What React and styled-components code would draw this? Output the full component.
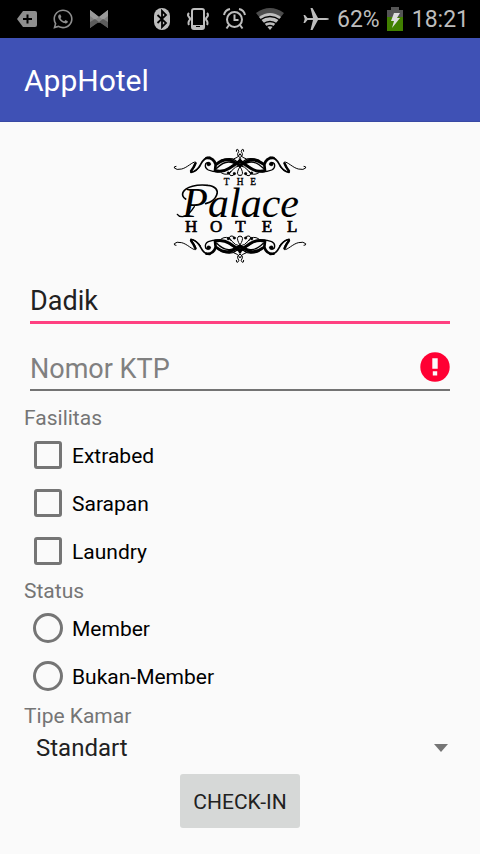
import React, { useState } from "react";
import styled, { createGlobalStyle } from "styled-components";
import { FaWhatsapp } from "react-icons/fa";

const GlobalStyle = createGlobalStyle`
  *, *::before, *::after { box-sizing: border-box; }
  body {
    margin: 0;
    background: #fafafa;
    font-family: Roboto, "Noto Sans", sans-serif;
  }
`;

const Screen = styled.div`
  min-height: 100vh;
  display: flex;
  flex-direction: column;
  background: #fafafa;
`;

const StatusBar = styled.div`
  height: 38px;
  padding: 0 11px 0 9px;
  display: flex;
  align-items: center;
  justify-content: space-between;
  background: #000;
  color: #bdbdbd;
  font-size: 23px;
  line-height: 38px;
`;

const StatusGroup = styled.div`
  display: flex;
  align-items: center;
  color: ${(p) => (p.$dim ? "#8e8e8e" : "#bdbdbd")};
`;

const StatusSlot = styled.span`
  width: 36px;
  height: 38px;
  display: flex;
  align-items: center;
  justify-content: center;
  svg { display: block; }
`;

const StatusInfo = styled.div`
  display: flex;
  align-items: center;
  margin-left: 10px;
`;

const StatusText = styled.span`
  margin-left: ${(p) => p.$gap}px;
  padding-top: 2px;
`;

const BatteryIcon = styled.svg`
  display: block;
  margin-left: 7px;
`;

const AppBar = styled.header`
  height: 84px;
  padding: 2px 24px 0;
  display: flex;
  align-items: center;
  background: #3f51b5;
  border-bottom: 1px solid #3949a3;
`;

const Title = styled.h1`
  margin: 0;
  font-size: 30px;
  line-height: 36px;
  font-weight: 400;
  color: #fff;
`;

const Form = styled.form`
  padding: 24px;
  display: flex;
  flex-direction: column;
`;

const Logo = styled.svg`
  display: block;
  align-self: center;
  margin: 2px 0 10px;
`;

const Field = styled.div`
  display: flex;
  align-items: center;
  height: ${(p) => (p.$active ? "50px" : "49px")};
  margin: 0 6px ${(p) => (p.$active ? "18px" : "11px")};
  padding-top: 2px;
  border-bottom: ${(p) => (p.$active ? "3px solid #ff4081" : "2px solid #737373")};
  svg { display: block; flex: none; }
`;

const TextInput = styled.input`
  flex: 1;
  min-width: 0;
  height: 40px;
  padding: 4px 0 0;
  border: 0;
  outline: 0;
  background: transparent;
  font-family: inherit;
  font-size: 27px;
  line-height: 36px;
  color: #212121;
  &::placeholder { color: #808080; opacity: 1; }
`;

const Group = styled.fieldset`
  margin: 0;
  padding: 0;
  border: 0;
  min-width: 0;
`;

const captionStyle = `
  display: block;
  padding: 3px 0 0;
  font-size: 21px;
  line-height: 26px;
  color: #757575;
`;
const Legend = styled.legend`${captionStyle}`;
const Caption = styled.label`${captionStyle}`;

const Option = styled.label`
  display: flex;
  align-items: center;
  height: 48px;
  font-size: 21px;
  line-height: 28px;
  color: #000;
`;

const OptionSlot = styled.span`
  width: 48px;
  display: flex;
  justify-content: center;
`;

const OptionText = styled.span`
  padding-top: 2px;
`;

const CheckBox = styled.input`
  appearance: none;
  width: 28px;
  height: 28px;
  margin: 0;
  border: 3px solid #757575;
  border-radius: 3px;
  &:checked { border-color: #ff4081; background: #ff4081; }
`;

const Radio = styled.input`
  appearance: none;
  width: 30px;
  height: 30px;
  margin: 0;
  border: 3px solid #757575;
  border-radius: 50%;
  &:checked { border-color: #ff4081; background: radial-gradient(#ff4081 50%, transparent 54%); }
`;

const SelectBox = styled.div`
  display: grid;
  align-items: center;
  height: 38px;
  svg {
    grid-area: 1 / 1;
    justify-self: end;
    pointer-events: none;
  }
`;

const Select = styled.select`
  grid-area: 1 / 1;
  appearance: none;
  width: 100%;
  height: 36px;
  padding: 0 36px 0 12px;
  border: 0;
  background: transparent;
  font-family: inherit;
  font-size: 24px;
  color: #212121;
`;

const SubmitButton = styled.button`
  align-self: center;
  min-width: 120px;
  height: 54px;
  margin-top: 7px;
  padding: 2px 12px 0;
  border: 0;
  border-radius: 3px;
  background: #d6d8d7;
  font-family: inherit;
  font-size: 21px;
  color: #212121;
`;

const TagIcon = () => (
  <svg width="20" height="18" viewBox="0 0 20 18">
    <path fill="currentColor" d="M6 1h12a2 2 0 0 1 2 2v12a2 2 0 0 1-2 2H6L0 9z" />
    <path stroke="#000" strokeWidth="2" d="M10.500 4.500v9M6 9h9" />
  </svg>
);

const BowIcon = () => (
  <svg width="18" height="18" viewBox="0 0 18 18">
    <path fill="#808080" d="M0 0l9 7 9-7v18l-9-7-9 7z" />
    <path fill="#9a9a9a" d="M0 0l13 10-4 3L0 6zM18 0L5 10l4 3 9-7z" />
    <path fill="#858585" d="M9 7l4 3-4 3-4-3z" />
    <path fill="#5c5c5c" d="M0 18v-6l5-3 4 3zM18 18v-6l-5-3-4 3z" />
  </svg>
);

const BluetoothIcon = () => (
  <svg width="16" height="24" viewBox="0 0 16 24">
    <rect x="0" y="1" width="16" height="22" rx="8" fill="currentColor" />
    <path fill="none" stroke="#000" strokeWidth="1.800" d="M3.500 8l8.500 8-4 4V4l4 4-8.500 8" />
  </svg>
);

const VibrateIcon = () => (
  <svg width="24" height="24" viewBox="0 0 24 24" fill="none" stroke="currentColor">
    <rect x="6" y="2" width="12" height="20" rx="2" strokeWidth="2" />
    <path strokeWidth="3" d="M6 19.500h12" />
    <path stroke="#000" strokeWidth="1" d="M10 19.500h4" />
    <path strokeWidth="2" d="M3 6q-2 2 0 4t0 4q-1 2 0 4M21 6q2 2 0 4t0 4q1 2 0 4" />
  </svg>
);

const AlarmIcon = () => (
  <svg width="23" height="24" viewBox="0 0 23 24" fill="none" stroke="currentColor" strokeWidth="2">
    <circle cx="11.500" cy="12.500" r="7.500" />
    <path d="M11.500 7.500v5.500h4M1 8q1-5 6-6M22 8q-1-5-6-6M6 18l-2.500 3.500M17 18l2.500 3.500" />
  </svg>
);

const WifiIcon = () => (
  <svg width="30" height="24" viewBox="0 0 30 24">
    <path fill="#4c4c4c" d="M1 6Q15-4 29 6l-4 5Q15 4 5 11z" />
    <path fill="currentColor" d="M4 10Q15 2 26 10L15 23z" />
    <path fill="none" stroke="#000" strokeWidth="1.500" d="M5 13q10-7 20 0M8 17q7-5 14 0M11 20q4-3 8 0" />
  </svg>
);

const PlaneIcon = () => (
  <svg width="26" height="24" viewBox="0 0 26 24">
    <path
      fill="currentColor"
      d="M26 12q0-1-3-1h-8L9.500 1H7.500l2.500 10H4.500L2 8H.500l1.200 4L.500 16H2l2.500-3H10L7.500 23h2L15 13h8q3 0 3-1z"
    />
  </svg>
);

const ErrorIcon = () => (
  <svg width="30" height="30" viewBox="0 0 30 30" role="img" aria-label="Error">
    <circle cx="15" cy="15" r="14.700" fill="#ff0033" />
    <path fill="#fafafa" d="M12.300 6.200h5.400v10.600h-5.400zM12.800 19.200h4.400v4.200h-4.400z" />
  </svg>
);

const Ornament = () => (
  <g fill="none" stroke="#000" strokeLinecap="round" strokeLinejoin="round">
    <path strokeWidth="3" d="M33 79q-7 0-5 5 6 7 22 3C67 83 82 65 92 66q6 5-15 31 18-2 29-19" />
    <path strokeWidth="7" d="M91 70q-5 13-13 23" />
    <path strokeWidth="5" d="M78 97Q96 94 107 73q11-22 28-21" />
    <path strokeWidth="8" d="M124 54q22-2 28 20l-2 18" />
    <path strokeWidth="4" d="M135 73q-6-9-13-2-4 13 8 19 30 12 57-2 24-15 40-31" />
    <circle cx="131" cy="72" r="6" fill="#000" strokeWidth="1" />
    <path strokeWidth="9" d="M151 92q24 5 42-7l32-21" />
    <path strokeWidth="9" d="M155 72q24-18 44-10l26 14" />
    <path strokeWidth="4" d="M155 85q23-23 43-18t27 10M168 61q20-8 35-4 13 5 22 19" />
    <path strokeWidth="3" d="M214 34q-1-7 4-6 7 5 0 13-3 6 7 12M206 57q14-3 19-15" />
    <path strokeWidth="3" d="M225 77q-15 2-24 14-8 15-24 11-8-3-9-4M208 101q-2 8-10 6-10-4 0-14M225 80q-11 17-6 24 3 5 6 2" />
    <circle cx="190" cy="99" r="4" fill="#000" strokeWidth="1" />
    <circle cx="208" cy="101" r="4" fill="#000" strokeWidth="1" />
  </g>
);

const FullOrnament = () => (
  <g>
    <Ornament />
    <g transform="matrix(-1 0 0 1 450 0)">
      <Ornament />
    </g>
  </g>
);

const PalaceLogo = () => (
  <Logo width="134" height="116" viewBox="24 24 402 348" role="img" aria-label="The Palace Hotel">
    <FullOrnament />
    <g transform="matrix(1 0 0 -1 0 395)">
      <FullOrnament />
    </g>
    <g fontFamily='"Liberation Serif", serif' fill="#000">
      <text x="176 215 256" y="135" fontSize="28" stroke="#000" strokeWidth="1">THE</text>
      <text x="52" y="230" fontSize="126" fontStyle="italic">Palace</text>
      <text x="60 135 211 290 366" y="275" fontSize="51" stroke="#000" strokeWidth="2">HOTEL</text>
    </g>
    <g fill="none" stroke="#000" strokeLinecap="round">
      <path strokeWidth="5" d="M62 177q-13-8-8-20c8-17 42-25 75-21 22 2 32 15 26 29-5 14-17 22-33 26" />
      <path strokeWidth="4" d="M88 200q-17 27-34 30-12 1-17-7" />
    </g>
  </Logo>
);

const facilities = ["Extrabed", "Sarapan", "Laundry"];
const statuses = ["Member", "Bukan-Member"];
const rooms = ["Standart", "Deluxe", "Suite"];

export default function App() {
  const [name, setName] = useState("Dadik");
  return (
    <Screen>
      <GlobalStyle />
      <StatusBar>
        <StatusGroup $dim>
          <StatusSlot><TagIcon /></StatusSlot>
          <StatusSlot><FaWhatsapp size={22} /></StatusSlot>
          <StatusSlot><BowIcon /></StatusSlot>
        </StatusGroup>
        <StatusGroup>
          <StatusSlot><BluetoothIcon /></StatusSlot>
          <StatusSlot><VibrateIcon /></StatusSlot>
          <StatusSlot><AlarmIcon /></StatusSlot>
          <StatusSlot><WifiIcon /></StatusSlot>
          <StatusInfo>
            <StatusSlot><PlaneIcon /></StatusSlot>
            <StatusText $gap={3}>62%</StatusText>
            <BatteryIcon width="16" height="24" viewBox="0 0 16 24">
              <path fill="#555" d="M4 0h8v3h4v8H0V3h4z" />
              <path fill="#418000" d="M0 10h16v14H0z" />
              <path fill="#ddd" d="M7 6h6l-3 5h3L5 21l2-7H4z" />
            </BatteryIcon>
            <StatusText $gap={9}>18:21</StatusText>
          </StatusInfo>
        </StatusGroup>
      </StatusBar>
      <AppBar>
        <Title>AppHotel</Title>
      </AppBar>
      <Form onSubmit={(e) => e.preventDefault()}>
        <PalaceLogo />
        <Field $active>
          <TextInput aria-label="Nama" value={name} onChange={(e) => setName(e.target.value)} />
        </Field>
        <Field>
          <TextInput aria-label="Nomor KTP" placeholder="Nomor KTP" aria-invalid="true" />
          <ErrorIcon />
        </Field>
        <Group>
          <Legend>Fasilitas</Legend>
          {facilities.map((item) => (
            <Option key={item}>
              <OptionSlot><CheckBox type="checkbox" name="fasilitas" value={item} /></OptionSlot>
              <OptionText>{item}</OptionText>
            </Option>
          ))}
        </Group>
        <Group>
          <Legend>Status</Legend>
          {statuses.map((item) => (
            <Option key={item}>
              <OptionSlot><Radio type="radio" name="status" value={item} /></OptionSlot>
              <OptionText>{item}</OptionText>
            </Option>
          ))}
        </Group>
        <Caption htmlFor="room">Tipe Kamar</Caption>
        <SelectBox>
          <Select id="room" defaultValue="Standart">
            {rooms.map((room) => <option key={room}>{room}</option>)}
          </Select>
          <svg width="30" height="8" viewBox="0 0 30 8"><path fill="#757575" d="M8 0h14l-7 8z" /></svg>
        </SelectBox>
        <SubmitButton type="submit">CHECK-IN</SubmitButton>
      </Form>
    </Screen>
  );
}
